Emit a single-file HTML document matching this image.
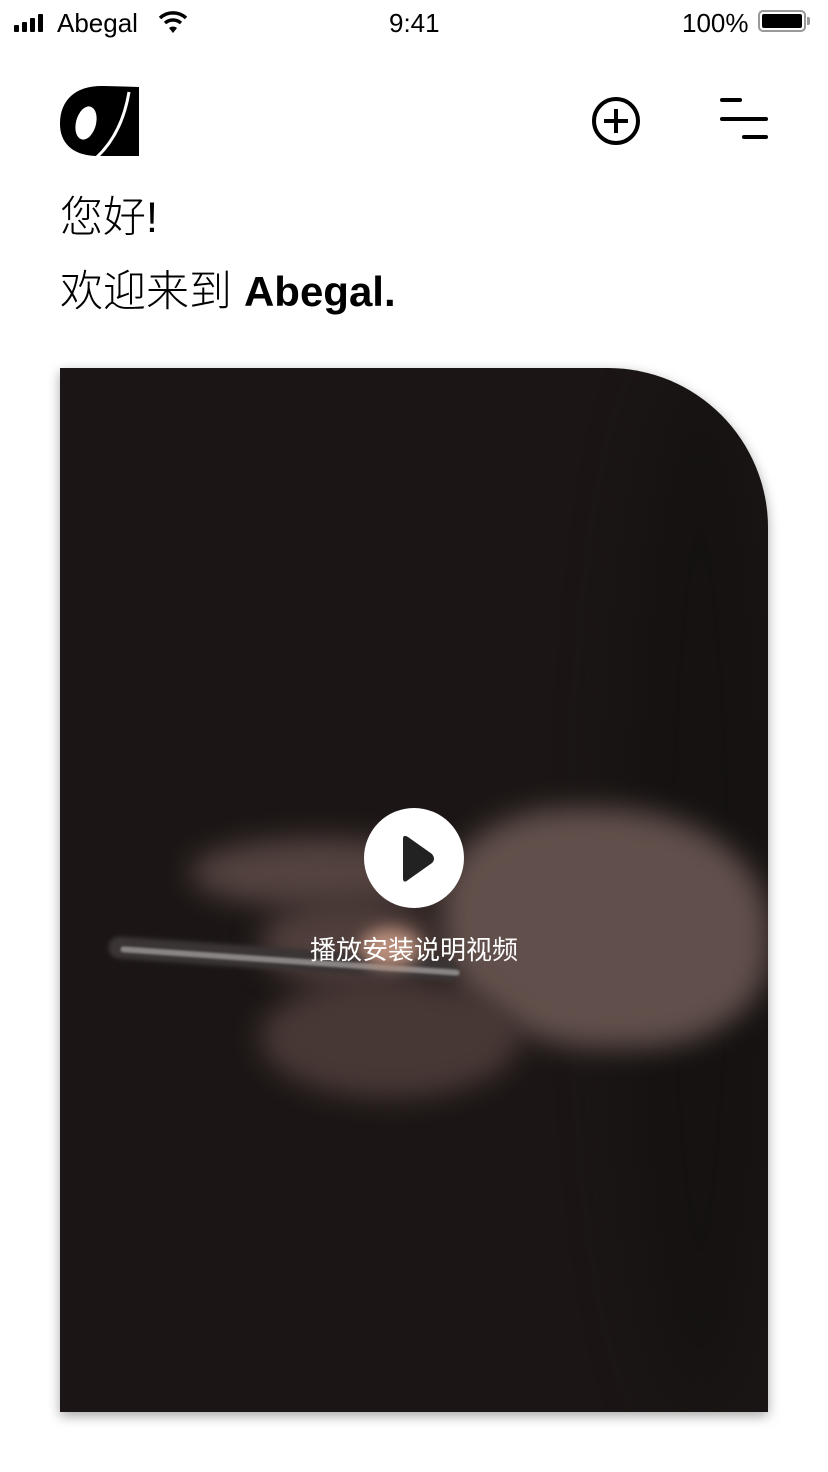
<!DOCTYPE html>
<html><head><meta charset="utf-8"><style>
body{margin:0;width:828px;height:1472px;background:#fff;position:relative;overflow:hidden;font-family:"Liberation Sans","Noto Sans CJK SC",sans-serif;color:#000}
.abs{position:absolute}
.card{position:absolute;left:60px;top:368px;width:708px;height:1044px;border-top-right-radius:160px;background:#1b1615;overflow:hidden;box-shadow:0 4px 12px rgba(0,0,0,.35)}
.b{position:absolute;border-radius:50%;filter:blur(14px)}
</style></head><body>
<div class="abs" style="left:14px;top:14px;display:flex;align-items:flex-end;gap:3px;height:18px">
<div style="width:5px;height:7px;background:#000;border-radius:1px"></div>
<div style="width:5px;height:10px;background:#000;border-radius:1px"></div>
<div style="width:5px;height:14px;background:#000;border-radius:1px"></div>
<div style="width:5px;height:18px;background:#000;border-radius:1px"></div>
</div>
<div class="abs" style="left:57px;top:8px;font-size:26px">Abegal</div>
<svg class="abs" style="left:158px;top:10px" width="30" height="24" viewBox="0 0 30 24"><path d="M2 8a19 19 0 0 1 26 0" stroke="#000" stroke-width="3.5" fill="none"/><path d="M7 13a12 12 0 0 1 16 0" stroke="#000" stroke-width="3.5" fill="none"/><path d="M11 18l4 5 4-5a6 6 0 0 0-8 0z" fill="#000"/></svg>
<div class="abs" style="left:389px;top:8px;font-size:26px">9:41</div>
<div class="abs" style="left:682px;top:8px;font-size:26px">100%</div>
<div class="abs" style="left:758px;top:10px;width:48px;height:22px;border:2px solid #999;border-radius:5px;box-sizing:border-box"><div style="margin:2px;height:14px;background:#000;border-radius:2px"></div></div>
<div class="abs" style="left:807px;top:17px;width:3px;height:8px;background:#999;border-radius:0 2px 2px 0"></div>
<svg class="abs" style="left:60px;top:84px" width="80" height="74" viewBox="0 0 80 74">
<path d="M0 40 C0 14 18 1 44 2 L79 3 L79 72 L38 72 C14 72 0 60 0 40Z" fill="#000"/>
<ellipse cx="26" cy="39" rx="10" ry="17" transform="rotate(15 26 39)" fill="#fff"/>
<path d="M69 8 Q62 50 36 74" stroke="#fff" stroke-width="3" fill="none"/>
</svg>
<svg class="abs" style="left:591px;top:96px" width="50" height="50" viewBox="0 0 50 50"><circle cx="25" cy="25" r="22" stroke="#000" stroke-width="4" fill="none"/><path d="M25 13v24M13 25h24" stroke="#000" stroke-width="4"/></svg>
<div class="abs" style="left:720px;top:98px;width:22px;height:4px;background:#000;border-radius:2px"></div>
<div class="abs" style="left:720px;top:117px;width:48px;height:4px;background:#000;border-radius:2px"></div>
<div class="abs" style="left:742px;top:135px;width:26px;height:4px;background:#000;border-radius:2px"></div>
<div class="abs" style="left:60px;top:190px;font-size:43px;font-weight:300;line-height:56px">您好!</div>
<div class="abs" style="left:60px;top:264px;font-size:43px;font-weight:300;line-height:56px;white-space:nowrap">欢迎来到 <span style="font-weight:700;font-size:42px;font-family:'Liberation Sans',sans-serif">Abegal.</span></div>
<div class="card">
<div class="b" style="left:560px;top:0;width:160px;height:1044px;background:#151211;filter:blur(30px)"></div>
<div class="b" style="left:380px;top:440px;width:330px;height:240px;background:#6e5a55;opacity:.85;border-radius:40% 50% 40% 50%"></div>
<div class="b" style="left:130px;top:470px;width:260px;height:70px;background:#5e4b47;opacity:.85"></div>
<div class="b" style="left:200px;top:530px;width:180px;height:90px;background:#4f3e3b"></div>
<div class="b" style="left:200px;top:610px;width:260px;height:120px;background:#4d3c39;opacity:.9"></div>
<div class="abs" style="left:48px;top:580px;width:350px;height:22px;background:#3a3434;border-radius:12px;transform:rotate(4deg);filter:blur(2px)"></div>
<div class="abs" style="left:60px;top:590px;width:340px;height:6px;background:#8a8585;border-radius:3px;transform:rotate(4deg);filter:blur(1px)"></div>
<div class="b" style="left:300px;top:560px;width:60px;height:40px;background:#b98e7c;filter:blur(8px)"></div>
<div class="abs" style="left:304px;top:440px;width:100px;height:100px;border-radius:50%;background:#fff"></div>
<svg class="abs" style="left:338px;top:466px" width="40" height="50" viewBox="0 0 40 50"><path d="M5 5 Q5 0 10 3 L34 20 Q38 25 34 29 L10 46 Q5 50 5 44 Z" fill="#222"/></svg>
<div class="abs" style="left:0;width:708px;top:562px;text-align:center;color:#fff;font-size:26px">播放安装说明视频</div>
</div>
</body></html>
